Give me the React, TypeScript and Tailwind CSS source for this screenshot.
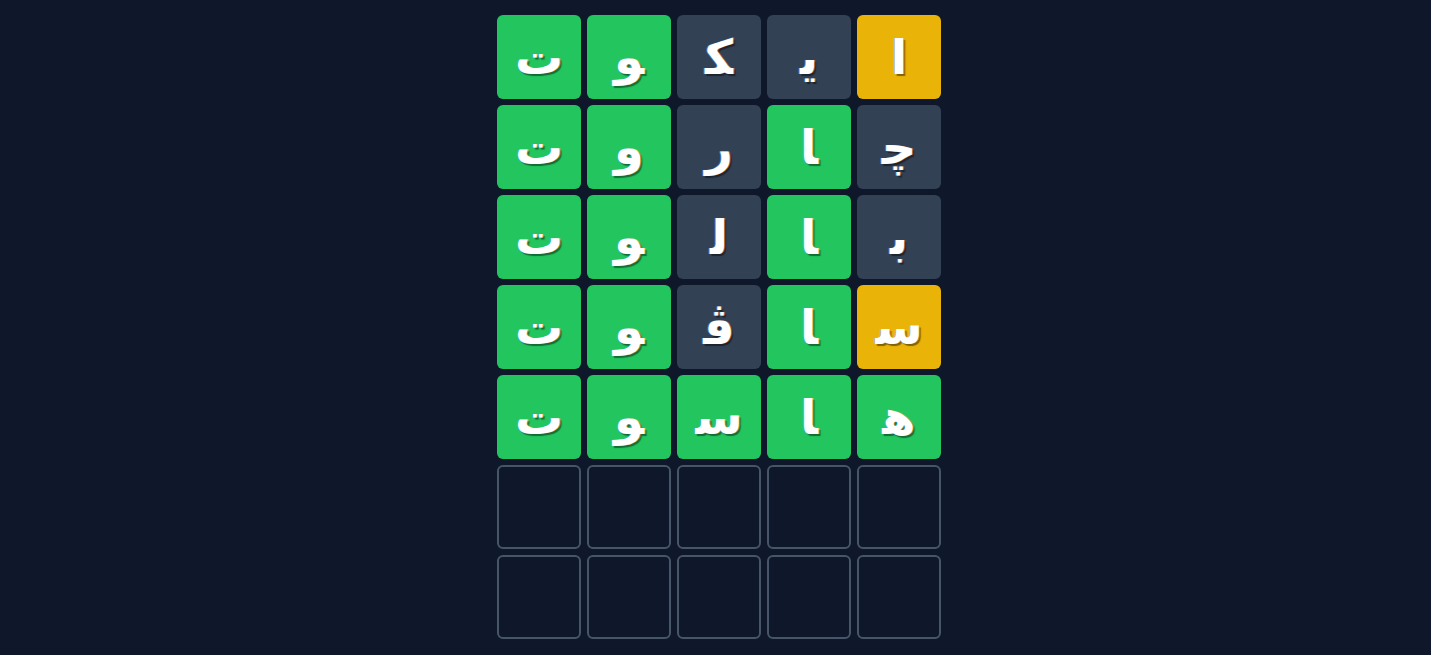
import React from "react";

type Tile = { ch: string; state: "correct" | "present" | "absent" | "empty" };

const ZWJ = "\u200D";

// rows are listed right to left (first letter sits on the right)
const guesses: Tile[][] = [
  [
    { ch: "ا", state: "present" },
    { ch: "ی" + ZWJ, state: "absent" },
    { ch: ZWJ + "ک" + ZWJ, state: "absent" },
    { ch: ZWJ + "و", state: "correct" },
    { ch: "ت", state: "correct" },
  ],
  [
    { ch: "چ" + ZWJ, state: "absent" },
    { ch: ZWJ + "ا", state: "correct" },
    { ch: "ر", state: "absent" },
    { ch: "و", state: "correct" },
    { ch: "ت", state: "correct" },
  ],
  [
    { ch: "ب" + ZWJ, state: "absent" },
    { ch: ZWJ + "ا", state: "correct" },
    { ch: "ل" + ZWJ, state: "absent" },
    { ch: ZWJ + "و", state: "correct" },
    { ch: "ت", state: "correct" },
  ],
  [
    { ch: "س" + ZWJ, state: "present" },
    { ch: ZWJ + "ا", state: "correct" },
    { ch: "ڤ" + ZWJ, state: "absent" },
    { ch: ZWJ + "و", state: "correct" },
    { ch: "ت", state: "correct" },
  ],
  [
    { ch: "ه" + ZWJ, state: "correct" },
    { ch: ZWJ + "ا", state: "correct" },
    { ch: "س" + ZWJ, state: "correct" },
    { ch: ZWJ + "و", state: "correct" },
    { ch: "ت", state: "correct" },
  ],
];

const emptyRow: Tile[] = Array.from({ length: 5 }, () => ({ ch: "", state: "empty" }));
const rows = [...guesses, emptyRow, emptyRow];

const tileClass = {
  correct: "bg-[#22c55e]",
  present: "bg-[#eab308]",
  absent: "bg-[#334155]",
  empty: "border-2 border-[#475569]",
};

export default function App() {
  return (
    <div className="w-full min-h-screen bg-[#0f172a] flex justify-center pt-[15px] pl-[7px] font-['DejaVu_Sans',sans-serif]">
      <div className="flex flex-col gap-[6px]">
        {rows.map((row, i) => (
          <div key={i} className="flex flex-row-reverse gap-[6px]">
            {row.map((t, j) => (
              <div
                key={j}
                className={`w-[84px] h-[84px] rounded-md flex items-center justify-center text-white text-[48px] font-bold [text-shadow:-1px_0_0_rgba(96,165,250,0.5),1px_0_0_rgba(251,146,60,0.5),2px_2px_1px_rgba(0,0,0,0.45)] ${tileClass[t.state]}`}
              >
                {t.ch}
              </div>
            ))}
          </div>
        ))}
      </div>
    </div>
  );
}
